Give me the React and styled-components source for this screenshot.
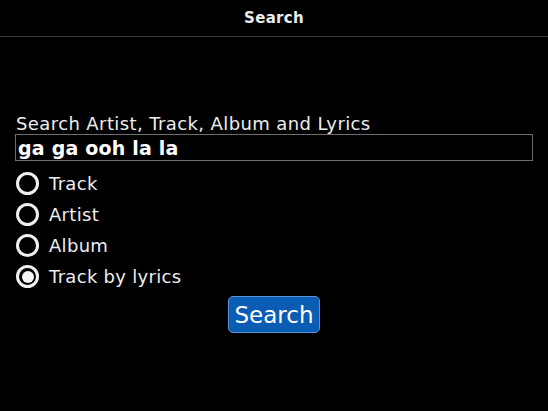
import React, { useState } from "react";
import styled, { createGlobalStyle } from "styled-components";

const GlobalStyle = createGlobalStyle`
  html, body {
    margin: 0;
    padding: 0;
    background: #000;
  }
  body {
    font-family: "DejaVu Sans", "Liberation Sans", sans-serif;
    color: #f2f2f2;
  }
`;

const Screen = styled.div`
  width: 548px;
  height: 411px;
  background: #000;
  display: flex;
  flex-direction: column;
  overflow: hidden;
`;

const TitleBar = styled.div`
  height: 36px;
  border-bottom: 1px solid #3a3a3a;
  display: flex;
  align-items: center;
  justify-content: center;
  font-weight: bold;
  font-size: 15px;
  letter-spacing: 0.3px;
  color: #ececec;
`;

const Form = styled.div`
  display: flex;
  flex-direction: column;
  padding: 77px 15px 0 15px;
`;

const Label = styled.div`
  font-size: 18px;
  line-height: 20px;
  letter-spacing: 0.4px;
  padding-left: 1px;
  color: #eeeeee;
`;

const Field = styled.div`
  height: 25px;
  border: 1px solid #6e6e6e;
  display: flex;
  align-items: center;
  padding-left: 2px;
  font-weight: bold;
  font-size: 19px;
  letter-spacing: 0.2px;
  color: #fff;
`;

const Options = styled.div`
  display: flex;
  flex-direction: column;
  margin-top: 7px;
`;

const Option = styled.label`
  display: flex;
  align-items: center;
  gap: 10px;
  height: 31px;
  font-size: 18px;
  letter-spacing: 0.3px;
  color: #eeeeee;
  cursor: pointer;
`;

const Ring = styled.span`
  width: 17px;
  height: 17px;
  border: 3px solid #f0f0f0;
  border-radius: 50%;
  margin-left: 1px;
  display: flex;
  align-items: center;
  justify-content: center;
  box-sizing: content-box;
  &::after {
    content: "";
    width: 12px;
    height: 12px;
    border-radius: 50%;
    background: ${(p) => (p.$on ? "#f4f4f4" : "transparent")};
  }
`;

const ButtonRow = styled.div`
  display: flex;
  justify-content: center;
  margin-top: 4px;
`;

const Button = styled.button`
  width: 92px;
  height: 37px;
  background: #0a5db3;
  border: 1px solid #5b93d6;
  border-radius: 5px;
  color: #fff;
  font-family: "DejaVu Sans", sans-serif;
  font-size: 23px;
  padding: 0;
`;

const choices = ["Track", "Artist", "Album", "Track by lyrics"];

function App() {
  const [picked, setPicked] = useState(3);
  return (
    <>
      <GlobalStyle />
      <Screen>
        <TitleBar>Search</TitleBar>
        <Form>
          <Label>Search Artist, Track, Album and Lyrics</Label>
          <Field>ga ga ooh la la</Field>
          <Options>
            {choices.map((c, i) => (
              <Option key={c} onClick={() => setPicked(i)}>
                <Ring $on={picked === i} />
                {c}
              </Option>
            ))}
          </Options>
          <ButtonRow>
            <Button>Search</Button>
          </ButtonRow>
        </Form>
      </Screen>
    </>
  );
}

export default App;
